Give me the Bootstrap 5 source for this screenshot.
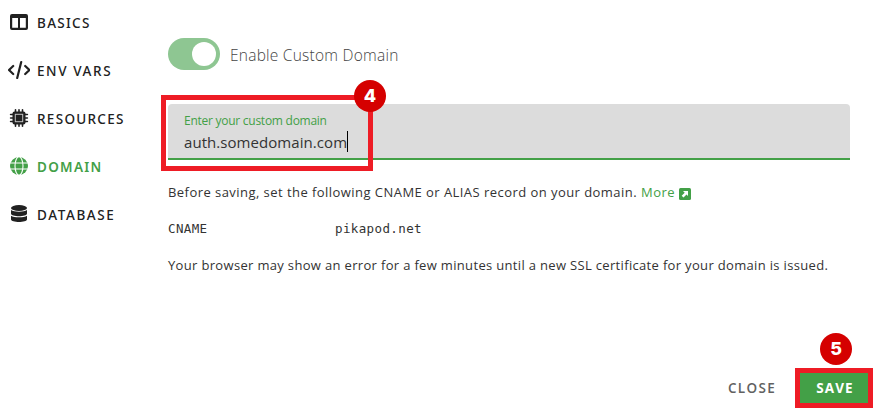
<!DOCTYPE html>
<html lang="en">
<head>
<meta charset="utf-8">
<meta name="viewport" content="width=device-width, initial-scale=1">
<title>Custom domain</title>
<link href="https://cdn.jsdelivr.net/npm/bootstrap@5.3.0/dist/css/bootstrap.min.css" rel="stylesheet">
<style>
  :root { --green: #43a047; --ink: #212121; }
  body { font-family: "Open Sans", "Noto Sans", sans-serif; color: var(--ink); background: #fff; overflow: hidden; }
  .screen { width: 876px; height: 408px; }
  .side { width: 168px; }
  .side .nav-link { height: 48px; padding: 0 0 4px 8px; color: var(--ink); font-family: "Noto Sans", "Open Sans", sans-serif; font-size: 13.5px; font-weight: 500; white-space: nowrap; letter-spacing: 1.3px; }
  .side .nav-link.active { color: var(--green); font-weight: 600; }
  .side .nav-link.wide { letter-spacing: 1.6px; }
  .side .nav-icon { width: 22px; height: 20px; margin-right: 7px; }
  .side .t { padding-top: 2px; }
  .pane { width: 682px; padding-top: 38px; }
  .t { display: inline-block; white-space: nowrap; }
  .toggle-track { width: 52px; height: 32px; background: #8ec692; padding: 4px; }
  .toggle-knob { width: 24px; height: 24px; background: #fff; }
  .toggle-label { margin-left: 10px; font-size: 15.5px; font-weight: 300; color: #444; line-height: 34px; height: 32px; letter-spacing: .24px; }
  .domain-field { height: 56px; margin-top: 34px; padding: 8px 16px 0; background: #dcdcdc; border-bottom: 2px solid var(--green); border-radius: 4px 4px 0 0; }
  .field-label { font-size: 12px; line-height: 18px; letter-spacing: -.26px; color: var(--green); }
  .field-value { margin-top: 1px; font-size: 15px; line-height: 23px; letter-spacing: .06px; color: #333; }
  .caret { width: 1px; height: 21px; background: #000; }
  .copy { font-size: 13px; line-height: 20px; color: #333; }
  .copy-dns { margin-top: 22px; letter-spacing: .45px; }
  .copy-ssl { margin-top: 16px; letter-spacing: .33px; }
  .green { color: var(--green); }
  .more-gap { margin-left: 4px; letter-spacing: .45px; }
  .record { margin-top: 17px; font-family: "DejaVu Sans Mono", "Liberation Mono", monospace; font-size: 12.5px; letter-spacing: .38px; line-height: 20px; color: #333; }
  .record-name { width: 167px; }
  .mark-box { position: absolute; border: 5px solid #ee1c25; }
  .mark-field { left: -7px; top: -9px; width: 212px; height: 76px; }
  .step { position: absolute; width: 32px; height: 32px; border-radius: 50%; background: #d50000; color: #fff; font-family: Inter, "Open Sans", sans-serif; font-size: 18px; font-weight: 800; line-height: 32px; text-align: center; }
  .step-four { left: 186px; top: -24px; }
  .step-five { left: 20px; top: -40px; }
  .actions { margin-top: auto; margin-right: -23px; height: 40px; }
  .btn-flat { font-size: 13.5px; font-weight: 600; border: 0; border-radius: 0; padding: 0; line-height: 40px; color: #616161; letter-spacing: 1.3px; }
  .save-wrap { width: 78px; height: 40px; margin-left: 19px; border: 5px solid #ee1c25; background: var(--green); }
  .save-wrap .btn-flat { color: #fff; line-height: 30px; font-weight: 700; letter-spacing: 1.1px; width: 100%; display: block; padding-left: 2px; }
</style>
</head>
<body>
<div class="screen d-flex">
  <nav class="side nav flex-column flex-nowrap flex-shrink-0">
    <a class="nav-link d-flex align-items-center" href="#"><svg class="nav-icon" viewBox="0 0 22 20"><path fill="currentColor" fill-rule="evenodd" d="M4 2h14a2 2 0 0 1 2 2v12a2 2 0 0 1-2 2H4a2 2 0 0 1-2-2V4a2 2 0 0 1 2-2zM4.200 6v9.800H10V6zM12 6v9.800h5.800V6z"/></svg><span class="t">BASICS</span></a>
    <a class="nav-link wide d-flex align-items-center" href="#"><svg class="nav-icon" viewBox="0 0 22 20" fill="none" stroke="currentColor" stroke-width="2.200" stroke-linecap="round" stroke-linejoin="round"><path d="M5.500 6L1.300 10l4.200 4M17.500 6l4.200 4-4.200 4M13.500 2L9.500 18" transform="translate(-.3 0)"/></svg><span class="t">ENV VARS</span></a>
    <a class="nav-link d-flex align-items-center" href="#"><svg class="nav-icon" viewBox="0 0 22 20"><path stroke="currentColor" stroke-width="1.600" stroke-linecap="round" d="M7.500 1.800v16.400M11 1.800v16.400M14.500 1.800v16.400M2.600 6.500h16.800M2.600 10h16.800M2.600 13.500h16.800"/><rect x="4.500" y="3.500" width="13" height="13" rx="2" fill="currentColor"/><rect x="7.300" y="6.300" width="7.400" height="7.400" fill="none" stroke="#c4c4c4" stroke-width="1"/></svg><span class="t">RESOURCES</span></a>
    <a class="nav-link active d-flex align-items-center" href="#"><svg class="nav-icon" viewBox="0 0 22 20"><circle cx="11" cy="10" r="9" fill="currentColor"/><g fill="none" stroke="#fff" stroke-width="1.100"><ellipse cx="11" cy="10" rx="4" ry="9.300"/><path d="M1 7h20M1 13h20"/></g></svg><span class="t">DOMAIN</span></a>
    <a class="nav-link wide d-flex align-items-center" href="#"><svg class="nav-icon" viewBox="0 0 22 20" fill="currentColor"><ellipse cx="11" cy="4" rx="8" ry="3"/><path d="M3 6c3 2.200 13 2.200 16 0v3.500c0 3.600-16 3.600-16 0zM3 11.700c3 2.200 13 2.200 16 0v3.600c0 3.600-16 3.600-16 0z"/></svg><span class="t">DATABASE</span></a>
  </nav>
  <main class="pane d-flex flex-column flex-shrink-0">
    <div class="d-flex">
      <div class="toggle-track rounded-pill d-flex justify-content-end"><div class="toggle-knob rounded-circle"></div></div>
      <span class="t toggle-label">Enable Custom Domain</span>
    </div>
    <div class="domain-field position-relative">
      <div class="field-label"><span class="t">Enter your custom domain</span></div>
      <div class="field-value d-flex"><span class="t">auth.somedomain.com</span><span class="caret"></span></div>
      <div class="mark-box mark-field"></div>
      <div class="step step-four">4</div>
    </div>
    <div class="copy copy-dns d-flex align-items-center"><span class="t">Before saving, set the following CNAME or ALIAS record on your domain.</span><span class="t green more-gap">More</span><svg class="ms-1 mt-1" width="12" height="12" viewBox="0 0 12 12"><rect width="12" height="12" rx="1.500" fill="#43a047"/><path d="M4 3h5v5L7.500 6.500 4.500 9.500 2.700 7.700 5.700 4.700z" fill="#fff"/></svg></div>
    <div class="record d-flex"><span class="record-name"><span class="t">CNAME</span></span><span class="t">pikapod.net</span></div>
    <div class="copy copy-ssl"><span class="t">Your browser may show an error for a few minutes until a new SSL certificate for your domain is issued.</span></div>
    <div class="actions d-flex justify-content-end">
      <button class="btn btn-flat" type="button">CLOSE</button>
      <div class="save-wrap position-relative">
        <button class="btn btn-flat" type="button">SAVE</button>
        <div class="step step-five">5</div>
      </div>
    </div>
  </main>
</div>
<script src="https://cdn.jsdelivr.net/npm/bootstrap@5.3.0/dist/js/bootstrap.bundle.min.js"></script>
</body>
</html>
